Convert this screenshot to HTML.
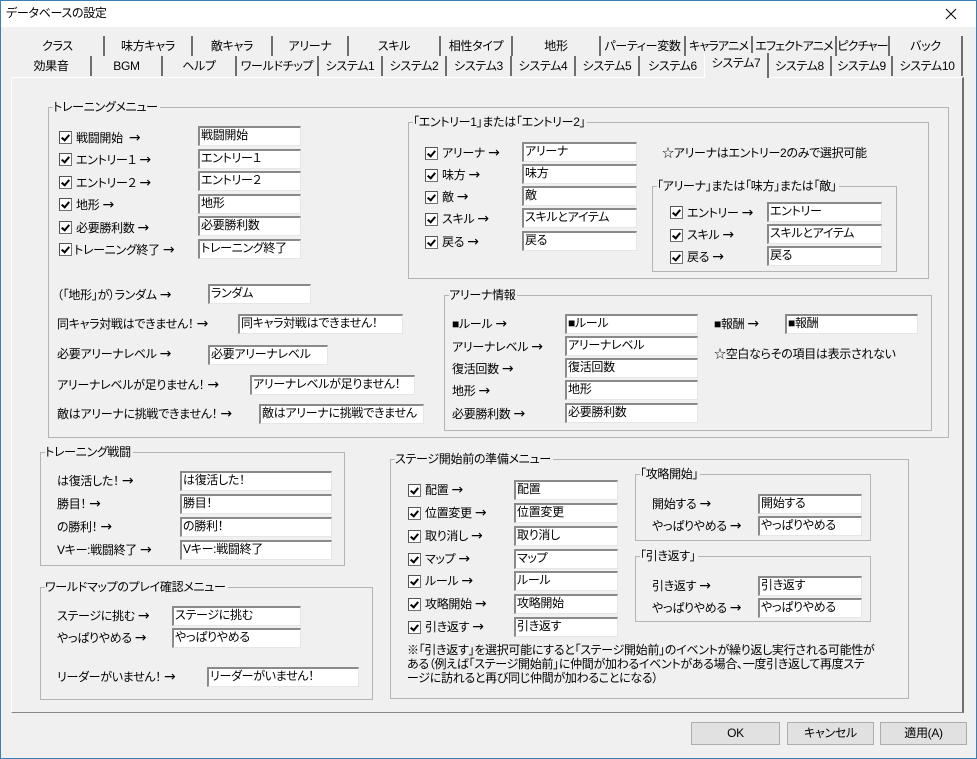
<!DOCTYPE html>
<html><head><meta charset="utf-8"><style>
*{margin:0;padding:0;box-sizing:border-box}
body{width:977px;height:759px;background:#f0f0f0;position:relative;overflow:hidden;font-family:"Liberation Sans","Noto Sans CJK JP",sans-serif;font-size:12px;color:#000;font-feature-settings:"palt";letter-spacing:-0.3px}
.a{position:absolute;white-space:nowrap;line-height:16px}
.a i{font-style:normal;font-size:14px;font-family:"DejaVu Sans",sans-serif;font-weight:normal}
.b{position:absolute;height:20px;background:#fff;border-top:2px solid #8a8a8a;border-left:2px solid #8a8a8a;border-right:1px solid #e6e6e6;border-bottom:1px solid #e6e6e6;padding-left:1px;line-height:15px;white-space:nowrap;overflow:hidden}
.c{position:absolute;width:13px;height:13px;background:#fff;border:1px solid #707070;border-top-color:#555;border-left-color:#555}
.c::after{content:"";position:absolute;left:3px;top:1px;width:3px;height:6px;border-right:2px solid #000;border-bottom:2px solid #000;transform:rotate(40deg)}
.g{position:absolute;border:1px solid #b4b4b4}
.gl{position:absolute;top:-9px;left:4px;background:#f0f0f0;padding:0 2px 0 0;line-height:16px;white-space:nowrap}
.tab{position:absolute;height:20px;text-align:center;line-height:20px;border-right:2px solid #6e6e6e;white-space:nowrap;overflow:hidden}
.btn{position:absolute;height:23px;background:#e1e1e1;border:1px solid #adadad;text-align:center;line-height:21px}
</style></head><body>
<div style="position:absolute;left:0;top:0;width:977px;height:759px;border:1px solid #3c7fb1"></div>
<div style="position:absolute;left:1px;top:1px;width:975px;height:26px;background:#fff"></div>
<div class="a" style="left:6px;top:5px">データベースの設定</div>
<svg style="position:absolute;left:945px;top:8px" width="12" height="12"><path d="M1 1L11 11M11 1L1 11" stroke="#000" stroke-width="1"/></svg>

<div class="tab" style="left:12px;top:36px;width:93px">クラス</div>
<div class="tab" style="left:105px;top:36px;width:88px">味方キャラ</div>
<div class="tab" style="left:193px;top:36px;width:80px">敵キャラ</div>
<div class="tab" style="left:273px;top:36px;width:76px">アリーナ</div>
<div class="tab" style="left:349px;top:36px;width:92px">スキル</div>
<div class="tab" style="left:441px;top:36px;width:72px">相性タイプ</div>
<div class="tab" style="left:513px;top:36px;width:88px">地形</div>
<div class="tab" style="left:601px;top:36px;width:85px">パーティー変数</div>
<div class="tab" style="left:686px;top:36px;width:67px;letter-spacing:-0.8px">キャラアニメ</div>
<div class="tab" style="left:753px;top:36px;width:84px;letter-spacing:-0.8px">エフェクトアニメ</div>
<div class="tab" style="left:837px;top:36px;width:53px;letter-spacing:-0.8px">ピクチャー</div>
<div class="tab" style="left:890px;top:36px;width:73px">バック</div>
<div class="tab" style="left:12px;top:56px;width:80px">効果音</div>
<div class="tab" style="left:92px;top:56px;width:71px">BGM</div>
<div class="tab" style="left:163px;top:56px;width:74px">ヘルプ</div>
<div class="tab" style="left:237px;top:56px;width:82px">ワールドチップ</div>
<div class="tab" style="left:319px;top:56px;width:64px">システム1</div>
<div class="tab" style="left:383px;top:56px;width:64px">システム2</div>
<div class="tab" style="left:447px;top:56px;width:65px">システム3</div>
<div class="tab" style="left:512px;top:56px;width:64px">システム4</div>
<div class="tab" style="left:576px;top:56px;width:64px">システム5</div>
<div class="tab" style="left:640px;top:56px;width:65px;border-right:none">システム6</div>
<div class="tab" style="left:704px;top:53px;width:65px;height:25px;line-height:20px;background:#f0f0f0;border-left:1px solid #fff;z-index:2">システム7</div>
<div class="tab" style="left:769px;top:56px;width:63px">システム8</div>
<div class="tab" style="left:832px;top:56px;width:61px">システム9</div>
<div class="tab" style="left:893px;top:56px;width:70px">システム10</div>
<div style="position:absolute;left:11px;top:77px;width:953px;height:636px;border:1px solid #fff;border-right:2px solid #6e6e6e;border-bottom:1px solid #888"></div>

<div class="g" style="left:48px;top:107px;width:901px;height:331px"><span class="gl">トレーニングメニュー</span></div>
<div class="c" style="left:59px;top:131px"></div><div class="a" style="left:76px;top:130px">戦闘開始 &nbsp;<i>→</i></div><div class="b" style="left:198px;top:126px;width:103px">戦闘開始</div>
<div class="c" style="left:59px;top:153px"></div><div class="a" style="left:76px;top:152px">エントリー１ <i>→</i></div><div class="b" style="left:198px;top:149px;width:103px">エントリー１</div>
<div class="c" style="left:59px;top:176px"></div><div class="a" style="left:76px;top:175px">エントリー２ <i>→</i></div><div class="b" style="left:198px;top:171px;width:103px">エントリー２</div>
<div class="c" style="left:59px;top:198px"></div><div class="a" style="left:76px;top:197px">地形 <i>→</i></div><div class="b" style="left:198px;top:194px;width:103px">地形</div>
<div class="c" style="left:59px;top:221px"></div><div class="a" style="left:76px;top:220px">必要勝利数 <i>→</i></div><div class="b" style="left:198px;top:216px;width:103px">必要勝利数</div>
<div class="c" style="left:59px;top:243px"></div><div class="a" style="left:74px;top:242px">トレーニング終了 <i>→</i></div><div class="b" style="left:198px;top:239px;width:103px">トレーニング終了</div>

<div class="a" style="left:57px;top:287px">（「地形」が）ランダム <i>→</i></div><div class="b" style="left:208px;top:284px;width:103px">ランダム</div>
<div class="a" style="left:57px;top:316px">同キャラ対戦はできません！ <i>→</i></div><div class="b" style="left:238px;top:314px;width:165px">同キャラ対戦はできません！</div>
<div class="a" style="left:57px;top:346px">必要アリーナレベル <i>→</i></div><div class="b" style="left:208px;top:345px;width:120px">必要アリーナレベル</div>
<div class="a" style="left:57px;top:377px">アリーナレベルが足りません！ <i>→</i></div><div class="b" style="left:250px;top:375px;width:165px">アリーナレベルが足りません！</div>
<div class="a" style="left:57px;top:406px">敵はアリーナに挑戦できません！ <i>→</i></div><div class="b" style="left:259px;top:404px;width:165px">敵はアリーナに挑戦できません</div>

<div class="g" style="left:408px;top:122px;width:521px;height:157px"><span class="gl">「エントリー1」または「エントリー2」</span></div>
<div class="c" style="left:425px;top:147px"></div><div class="a" style="left:442px;top:145px">アリーナ <i>→</i></div><div class="b" style="left:522px;top:142px;width:115px">アリーナ</div>
<div class="c" style="left:425px;top:169px"></div><div class="a" style="left:442px;top:167px">味方 <i>→</i></div><div class="b" style="left:522px;top:164px;width:115px">味方</div>
<div class="c" style="left:425px;top:191px"></div><div class="a" style="left:442px;top:189px">敵 <i>→</i></div><div class="b" style="left:522px;top:186px;width:115px">敵</div>
<div class="c" style="left:425px;top:213px"></div><div class="a" style="left:442px;top:211px">スキル <i>→</i></div><div class="b" style="left:522px;top:208px;width:115px">スキルとアイテム</div>
<div class="c" style="left:425px;top:236px"></div><div class="a" style="left:442px;top:234px">戻る <i>→</i></div><div class="b" style="left:522px;top:231px;width:115px">戻る</div>
<div class="a" style="left:662px;top:145px">☆アリーナはエントリー2のみで選択可能</div>
<div class="g" style="left:652px;top:186px;width:245px;height:86px"><span class="gl">「アリーナ」または「味方」または「敵」</span></div>
<div class="c" style="left:670px;top:206px"></div><div class="a" style="left:687px;top:205px">エントリー <i>→</i></div><div class="b" style="left:767px;top:202px;width:115px">エントリー</div>
<div class="c" style="left:670px;top:229px"></div><div class="a" style="left:687px;top:227px">スキル <i>→</i></div><div class="b" style="left:767px;top:224px;width:115px">スキルとアイテム</div>
<div class="c" style="left:670px;top:251px"></div><div class="a" style="left:687px;top:249px">戻る <i>→</i></div><div class="b" style="left:767px;top:246px;width:115px">戻る</div>

<div class="g" style="left:444px;top:295px;width:488px;height:136px"><span class="gl">アリーナ情報</span></div>
<div class="a" style="left:452px;top:316px">■ルール <i>→</i></div><div class="b" style="left:565px;top:314px;width:133px">■ルール</div>
<div class="a" style="left:452px;top:339px">アリーナレベル <i>→</i></div><div class="b" style="left:565px;top:336px;width:133px">アリーナレベル</div>
<div class="a" style="left:452px;top:361px">復活回数 <i>→</i></div><div class="b" style="left:565px;top:358px;width:133px">復活回数</div>
<div class="a" style="left:452px;top:383px">地形 <i>→</i></div><div class="b" style="left:565px;top:380px;width:133px">地形</div>
<div class="a" style="left:452px;top:406px">必要勝利数 <i>→</i></div><div class="b" style="left:565px;top:403px;width:133px">必要勝利数</div>
<div class="a" style="left:714px;top:316px">■報酬 <i>→</i></div><div class="b" style="left:785px;top:314px;width:133px">■報酬</div>
<div class="a" style="left:714px;top:346px">☆空白ならその項目は表示されない</div>

<div class="g" style="left:40px;top:452px;width:305px;height:114px"><span class="gl">トレーニング戦闘</span></div>
<div class="a" style="left:57px;top:473px">は復活した！ <i>→</i></div><div class="b" style="left:180px;top:471px;width:152px">は復活した！</div>
<div class="a" style="left:57px;top:496px">勝目！ <i>→</i></div><div class="b" style="left:180px;top:494px;width:152px">勝目！</div>
<div class="a" style="left:57px;top:519px">の勝利！ <i>→</i></div><div class="b" style="left:180px;top:517px;width:152px">の勝利！</div>
<div class="a" style="left:57px;top:542px">Vキー:戦闘終了 <i>→</i></div><div class="b" style="left:180px;top:540px;width:152px">Vキー:戦闘終了</div>

<div class="g" style="left:40px;top:587px;width:333px;height:113px"><span class="gl">ワールドマップのプレイ確認メニュー</span></div>
<div class="a" style="left:57px;top:608px">ステージに挑む <i>→</i></div><div class="b" style="left:172px;top:606px;width:129px">ステージに挑む</div>
<div class="a" style="left:57px;top:630px">やっぱりやめる <i>→</i></div><div class="b" style="left:172px;top:628px;width:129px">やっぱりやめる</div>
<div class="a" style="left:57px;top:669px">リーダーがいません！ <i>→</i></div><div class="b" style="left:207px;top:667px;width:152px">リーダーがいません！</div>

<div class="g" style="left:390px;top:459px;width:519px;height:240px"><span class="gl">ステージ開始前の準備メニュー</span></div>
<div class="c" style="left:408px;top:484px"></div><div class="a" style="left:425px;top:482px">配置 <i>→</i></div><div class="b" style="left:514px;top:480px;width:104px">配置</div>
<div class="c" style="left:408px;top:507px"></div><div class="a" style="left:425px;top:505px">位置変更 <i>→</i></div><div class="b" style="left:514px;top:503px;width:104px">位置変更</div>
<div class="c" style="left:408px;top:530px"></div><div class="a" style="left:425px;top:528px">取り消し <i>→</i></div><div class="b" style="left:514px;top:526px;width:104px">取り消し</div>
<div class="c" style="left:408px;top:553px"></div><div class="a" style="left:425px;top:551px">マップ <i>→</i></div><div class="b" style="left:514px;top:549px;width:104px">マップ</div>
<div class="c" style="left:408px;top:575px"></div><div class="a" style="left:425px;top:573px">ルール <i>→</i></div><div class="b" style="left:514px;top:571px;width:104px">ルール</div>
<div class="c" style="left:408px;top:598px"></div><div class="a" style="left:425px;top:596px">攻略開始 <i>→</i></div><div class="b" style="left:514px;top:594px;width:104px">攻略開始</div>
<div class="c" style="left:408px;top:621px"></div><div class="a" style="left:425px;top:619px">引き返す <i>→</i></div><div class="b" style="left:514px;top:617px;width:104px">引き返す</div>
<div class="g" style="left:635px;top:474px;width:236px;height:67px"><span class="gl">「攻略開始」</span></div>
<div class="a" style="left:652px;top:496px">開始する <i>→</i></div><div class="b" style="left:758px;top:494px;width:104px">開始する</div>
<div class="a" style="left:652px;top:518px">やっぱりやめる <i>→</i></div><div class="b" style="left:758px;top:516px;width:104px">やっぱりやめる</div>
<div class="g" style="left:635px;top:556px;width:236px;height:66px"><span class="gl">「引き返す」</span></div>
<div class="a" style="left:652px;top:578px">引き返す <i>→</i></div><div class="b" style="left:758px;top:576px;width:104px">引き返す</div>
<div class="a" style="left:652px;top:600px">やっぱりやめる <i>→</i></div><div class="b" style="left:758px;top:598px;width:104px">やっぱりやめる</div>
<div class="a" style="left:407px;top:643px;line-height:14px">※「引き返す」を選択可能にすると「ステージ開始前」のイベントが繰り返し実行される可能性が<br>ある（例えば「ステージ開始前」に仲間が加わるイベントがある場合、一度引き返して再度ステ<br>ージに訪れると再び同じ仲間が加わることになる）</div>

<div class="btn" style="left:691px;top:722px;width:89px">OK</div>
<div class="btn" style="left:787px;top:722px;width:87px">キャンセル</div>
<div class="btn" style="left:880px;top:722px;width:87px">適用(A)</div>
</body></html>
